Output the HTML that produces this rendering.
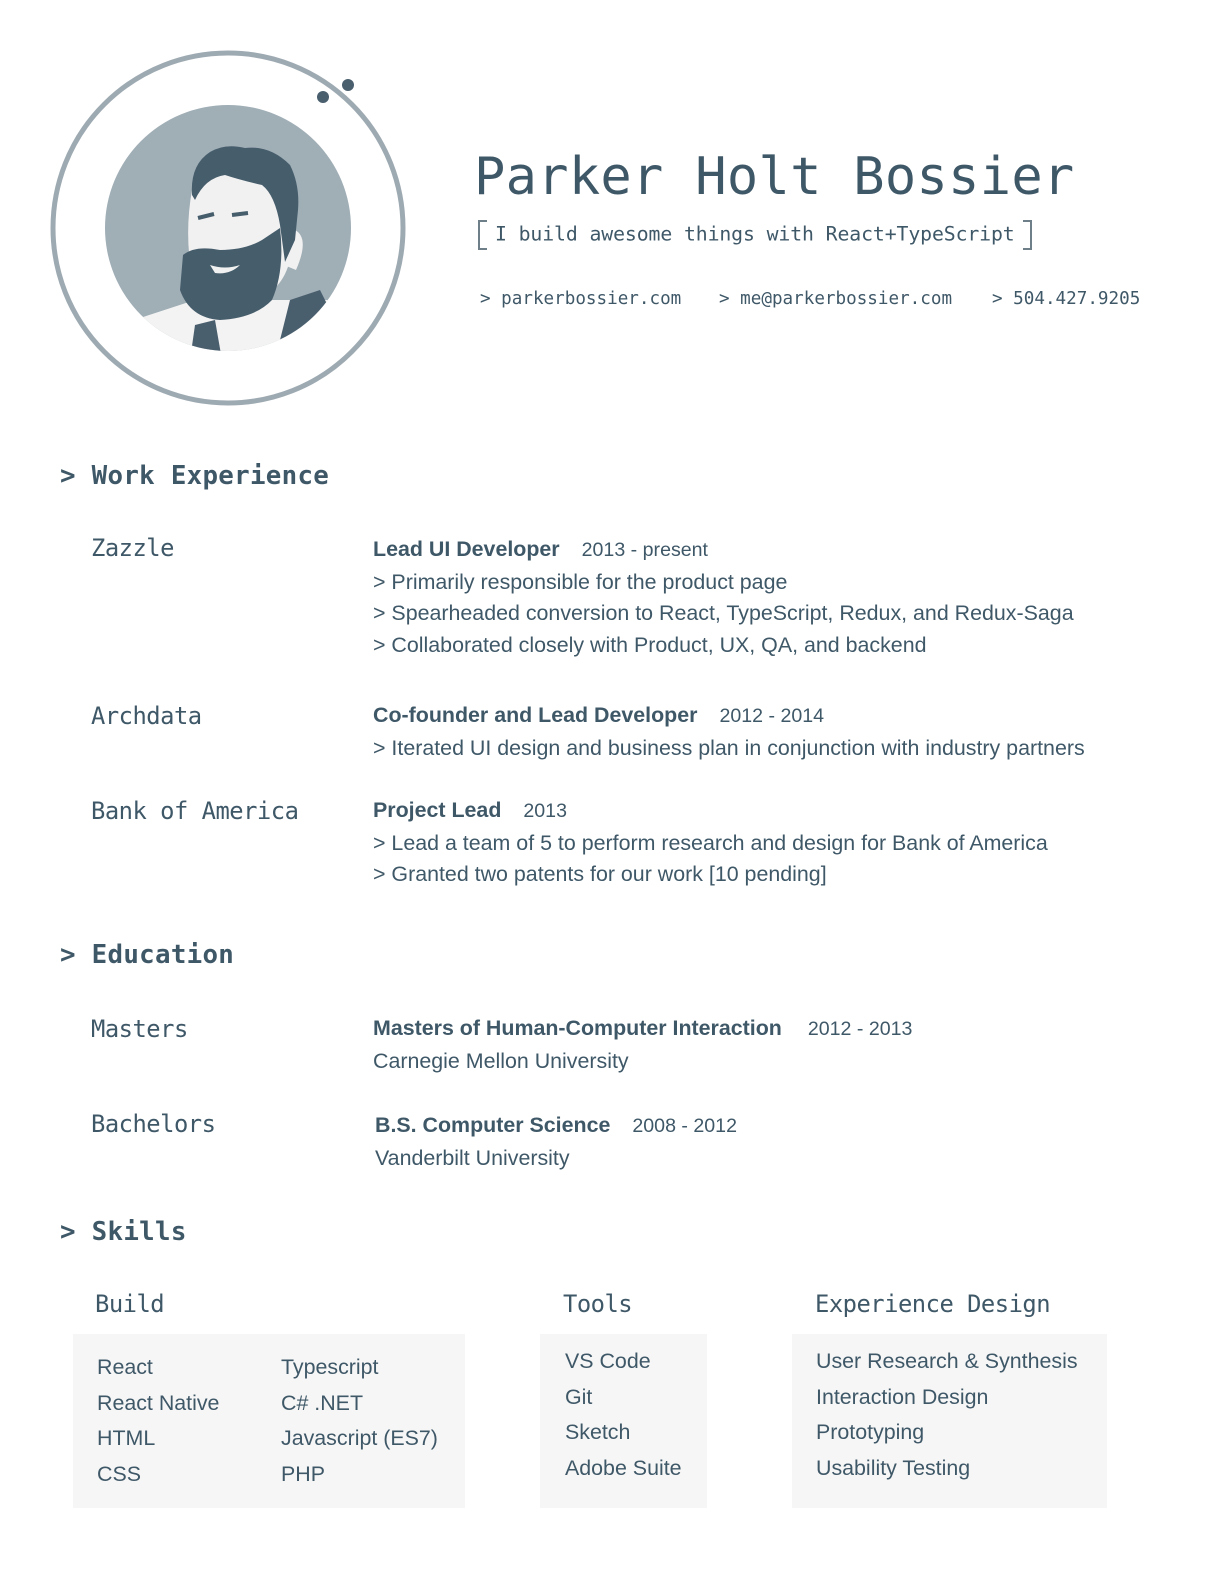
<!DOCTYPE html>
<html><head><meta charset="utf-8"><style>
html,body{margin:0;padding:0}
body{background:#fff;width:1224px;height:1584px;position:relative;overflow:hidden;color:#3f5868;font-family:"Liberation Sans",Arial,sans-serif}
.a{position:absolute;white-space:nowrap}
.m{font-family:"DejaVu Sans Mono","Liberation Mono",monospace}
.h{font-size:25.8px;font-weight:bold;letter-spacing:0.3px}
.co{font-size:23.8px;letter-spacing:-0.5px}
.b{font-size:21.4px;line-height:31.5px}
.b b{font-weight:bold}
.d{margin-left:22px;font-size:19.6px}
.box{position:absolute;background:#f6f6f6}
</style></head><body>
<svg class="a" style="left:0;top:0" width="420" height="420" viewBox="0 0 420 420">
<defs><clipPath id="c"><circle cx="228" cy="228" r="123"/></clipPath></defs>
<circle cx="228" cy="228" r="175" fill="none" stroke="#9eaab2" stroke-width="5"/>
<circle cx="323" cy="97" r="6" fill="#4a5f6e"/><circle cx="348" cy="85" r="6" fill="#4a5f6e"/>
<circle cx="228" cy="228" r="123" fill="#a0aeb6"/>
<g clip-path="url(#c)">
<path d="M140 318 L195 300 L270 300 L310 300 L345 300 L360 360 L130 360 Z" fill="#f3f3f3"/>
<path d="M290 300 L320 290 L335 320 L300 360 L275 360 Z" fill="#4a5f6e"/>
<path d="M195 325 L215 320 L222 360 L190 360 Z" fill="#4a5f6e"/>
<path d="M192 190 Q200 165 240 170 Q275 175 285 215 L290 260 Q280 300 240 300 L195 290 Q183 240 192 190 Z" fill="#f1f1f1"/>
<path d="M295 230 Q310 238 296 270 L284 265 Z" fill="#f1f1f1"/>
<path d="M192 195 Q190 165 210 152 Q225 143 245 148 Q270 145 290 165 Q300 185 298 210 L295 240 L285 262 L280 225 Q275 195 262 185 Q240 180 225 175 Q205 178 195 200 Z" fill="#465d6c"/>
<path d="M183 255 Q195 245 220 250 Q245 250 262 240 L280 228 Q285 270 272 300 Q255 318 220 320 Q190 318 180 290 Z" fill="#465d6c"/>
<path d="M210 265 Q225 270 240 265 Q230 275 215 273 Z" fill="#f1f1f1"/>
<path d="M198 218 L214 214 M232 215 L248 213" stroke="#465d6c" stroke-width="4"/>
</g>
</svg>
<div class="a m" style="left:474px;top:142px;font-size:52px;line-height:70px;letter-spacing:0.3px">Parker Holt Bossier</div>
<div class="a m" style="left:478px;top:220px;font-size:19.8px;line-height:28px;letter-spacing:-0.1px"><span style="display:inline-block;width:9px;height:30px;border:2px solid #6f7f8a;border-right:none;vertical-align:middle;margin-right:8px;box-sizing:border-box"></span>I build awesome things with React+TypeScript<span style="display:inline-block;width:9px;height:30px;border:2px solid #6f7f8a;border-left:none;vertical-align:middle;margin-left:8px;box-sizing:border-box"></span></div>
<div class="a m" style="left:480px;top:287px;font-size:17.6px;line-height:24px">&gt; parkerbossier.com</div>
<div class="a m" style="left:719px;top:287px;font-size:17.6px;line-height:24px">&gt; me@parkerbossier.com</div>
<div class="a m" style="left:992px;top:287px;font-size:17.6px;line-height:24px">&gt; 504.427.9205</div>

<div class="a m h" style="left:60px;top:461px">&gt; Work Experience</div>
<div class="a m co" style="left:91px;top:534px">Zazzle</div>
<div class="a b" style="left:373px;top:534px"><b>Lead UI Developer</b><span class="d">2013 - present</span><br>&gt; Primarily responsible for the product page<br>&gt; Spearheaded conversion to React, TypeScript, Redux, and Redux-Saga<br>&gt; Collaborated closely with Product, UX, QA, and backend</div>
<div class="a m co" style="left:91px;top:702px">Archdata</div>
<div class="a b" style="left:373px;top:700px"><b>Co-founder and Lead Developer</b><span class="d">2012 - 2014</span><br>&gt; Iterated UI design and business plan in conjunction with industry partners</div>
<div class="a m co" style="left:91px;top:797px">Bank of America</div>
<div class="a b" style="left:373px;top:795px"><b>Project Lead</b><span class="d">2013</span><br>&gt; Lead a team of 5 to perform research and design for Bank of America<br>&gt; Granted two patents for our work [10 pending]</div>

<div class="a m h" style="left:60px;top:940px">&gt; Education</div>
<div class="a m co" style="left:91px;top:1015px">Masters</div>
<div class="a b" style="left:373px;top:1013px"><b>Masters of Human-Computer Interaction</b><span class="d" style="margin-left:26px">2012 - 2013</span><br>Carnegie Mellon University</div>
<div class="a m co" style="left:91px;top:1110px">Bachelors</div>
<div class="a b" style="left:375px;top:1110px"><b>B.S. Computer Science</b><span class="d">2008 - 2012</span><br>Vanderbilt University</div>

<div class="a m h" style="left:60px;top:1217px">&gt; Skills</div>
<div class="a m co" style="left:95px;top:1290px">Build</div>
<div class="a m co" style="left:563px;top:1290px">Tools</div>
<div class="a m co" style="left:815px;top:1290px">Experience Design</div>
<div class="box" style="left:73px;top:1334px;width:392px;height:174px"></div>
<div class="box" style="left:540px;top:1334px;width:167px;height:174px"></div>
<div class="box" style="left:792px;top:1334px;width:315px;height:174px"></div>
<div class="a b" style="left:97px;top:1350px;line-height:35.5px">React<br>React Native<br>HTML<br>CSS</div>
<div class="a b" style="left:281px;top:1350px;line-height:35.5px">Typescript<br>C# .NET<br>Javascript (ES7)<br>PHP</div>
<div class="a b" style="left:565px;top:1344px;line-height:35.5px">VS Code<br>Git<br>Sketch<br>Adobe Suite</div>
<div class="a b" style="left:816px;top:1344px;line-height:35.5px">User Research &amp; Synthesis<br>Interaction Design<br>Prototyping<br>Usability Testing</div>
</body></html>
